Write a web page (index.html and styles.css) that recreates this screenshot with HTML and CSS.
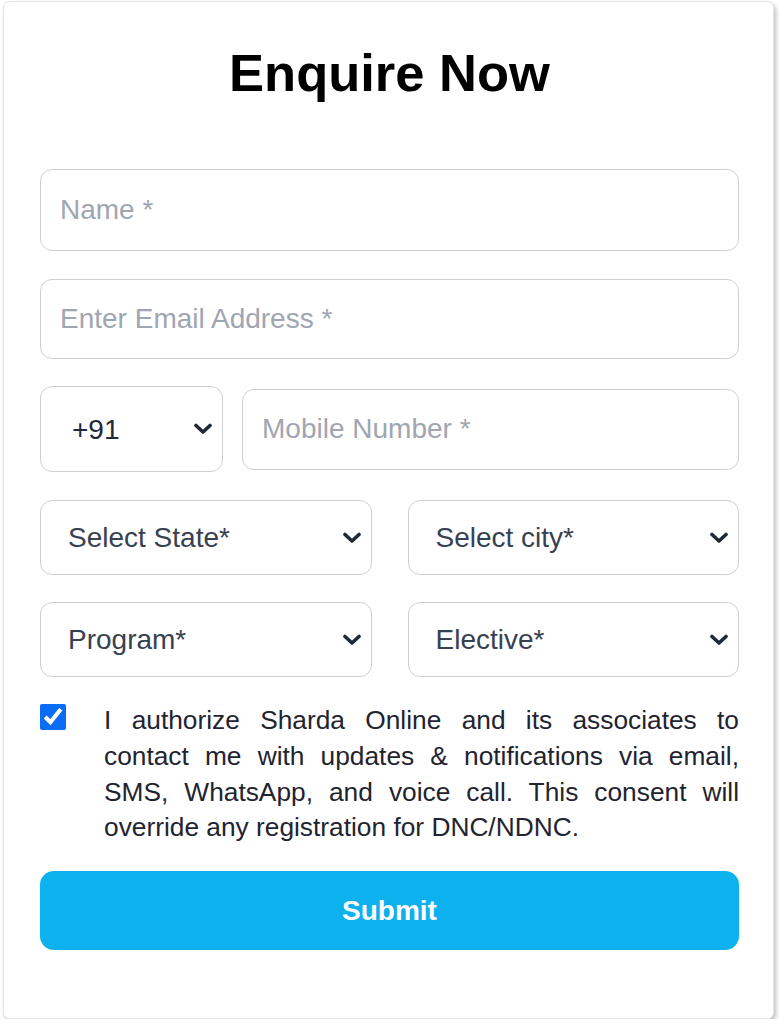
FILE: index.html
```html
<!DOCTYPE html>
<html lang="en">
<head>
<meta charset="utf-8">
<title>Enquire Now</title>
<link rel="stylesheet" href="styles.css">
</head>
<body>
<div class="card">
  <h1 class="title">Enquire Now</h1>
  <form class="form">
    <input class="field field-name" type="text" placeholder="Name *">
    <input class="field field-email" type="email" placeholder="Enter Email Address *">
    <div class="row-phone">
      <div class="select-wrap code-wrap">
        <select class="select select-code"><option>+91</option></select>
        <svg class="chev" viewBox="0 0 20 12" width="20" height="12"><polyline points="3,2.5 10,9 17,2.5" fill="none" stroke="#1f2937" stroke-width="3.6" stroke-linecap="round" stroke-linejoin="round"/></svg>
      </div>
      <input class="field field-mobile" type="tel" placeholder="Mobile Number *">
    </div>
    <div class="row-pair row-state">
      <div class="select-wrap">
        <select class="select"><option>Select State*</option></select>
        <svg class="chev" viewBox="0 0 20 12" width="20" height="12"><polyline points="3,2.5 10,9 17,2.5" fill="none" stroke="#1f2937" stroke-width="3.6" stroke-linecap="round" stroke-linejoin="round"/></svg>
      </div>
      <div class="select-wrap">
        <select class="select"><option>Select city*</option></select>
        <svg class="chev" viewBox="0 0 20 12" width="20" height="12"><polyline points="3,2.5 10,9 17,2.5" fill="none" stroke="#1f2937" stroke-width="3.6" stroke-linecap="round" stroke-linejoin="round"/></svg>
      </div>
    </div>
    <div class="row-pair row-program">
      <div class="select-wrap">
        <select class="select"><option>Program*</option></select>
        <svg class="chev" viewBox="0 0 20 12" width="20" height="12"><polyline points="3,2.5 10,9 17,2.5" fill="none" stroke="#1f2937" stroke-width="3.6" stroke-linecap="round" stroke-linejoin="round"/></svg>
      </div>
      <div class="select-wrap">
        <select class="select"><option>Elective*</option></select>
        <svg class="chev" viewBox="0 0 20 12" width="20" height="12"><polyline points="3,2.5 10,9 17,2.5" fill="none" stroke="#1f2937" stroke-width="3.6" stroke-linecap="round" stroke-linejoin="round"/></svg>
      </div>
    </div>
    <label class="consent">
      <input class="check" type="checkbox" checked>
      <span class="consent-text">I authorize Sharda Online and its associates to contact me with updates &amp; notifications via email, SMS, WhatsApp, and voice call. This consent will override any registration for DNC/NDNC.</span>
    </label>
    <button class="submit" type="button">Submit</button>
  </form>
</div>
</body>
</html>
```
FILE: styles.css
```css
* { box-sizing: border-box; }
html, body { margin: 0; padding: 0; background: #ffffff; }
body {
  font-family: "Liberation Sans", Arial, sans-serif;
  padding: 1px 0 0 3px;
}
.card {
  width: 771px;
  height: 1018px;
  background: #ffffff;
  border: 1px solid #e6e6e6;
  border-radius: 6px;
  box-shadow: 2px 3px 4px rgba(0, 0, 0, 0.25);
  padding: 41px 34px 0 36px;
}
.title {
  margin: 0;
  font-size: 52.5px;
  line-height: 60px;
  font-weight: 700;
  color: #000000;
  text-align: center;
}
.form {
  margin-top: 66px;
  display: flex;
  flex-direction: column;
}
.field {
  display: block;
  width: 100%;
  height: 80px;
  border: 1px solid #cfcfcf;
  border-radius: 12px;
  background: #ffffff;
  padding: 0 19px;
  font-family: "Liberation Sans", Arial, sans-serif;
  font-size: 28px;
  color: #1f2937;
  outline: none;
}
.field::placeholder { color: #a0a6b1; }
.field-name { height: 82px; }
.field-email { margin-top: 28px; }
.row-phone {
  margin-top: 27px;
  display: flex;
  align-items: center;
  gap: 19px;
  height: 86px;
}
.field-mobile { flex: 1; height: 81px; }
.row-pair {
  display: grid;
  grid-template-columns: 1fr 1fr;
  column-gap: 36px;
}
.row-state { margin-top: 28px; }
.row-program { margin-top: 27px; }
.select-wrap {
  position: relative;
  height: 75px;
}
.row-phone .code-wrap { width: 183px; flex: none; height: 86px; }
.select {
  -webkit-appearance: none;
  appearance: none;
  width: 100%;
  height: 100%;
  border: 1px solid #cfcfcf;
  border-radius: 12px;
  background: #ffffff;
  padding: 0 40px 0 27px;
  font-family: "Liberation Sans", Arial, sans-serif;
  font-size: 28px;
  color: #374151;
  outline: none;
}
.select-code { padding-left: 31px; color: #1f2937; }
.chev {
  position: absolute;
  right: 10px;
  top: 50%;
  margin-top: -6px;
  pointer-events: none;
}
.consent {
  margin-top: 26px;
  display: flex;
  align-items: flex-start;
  gap: 38px;
}
.check {
  flex: none;
  width: 26px;
  height: 26px;
  margin: 1px 0 0 0;
  accent-color: #0b6cf5;
}
.consent-text {
  font-size: 26.3px;
  line-height: 35.8px;
  color: #1f2430;
  text-align: justify;
}
.submit {
  margin-top: 25px;
  width: 100%;
  height: 79px;
  border: none;
  border-radius: 14px;
  background: #0db1ee;
  color: #ffffff;
  font-family: "Liberation Sans", Arial, sans-serif;
  font-size: 28px;
  font-weight: 700;
  cursor: pointer;
}
```
